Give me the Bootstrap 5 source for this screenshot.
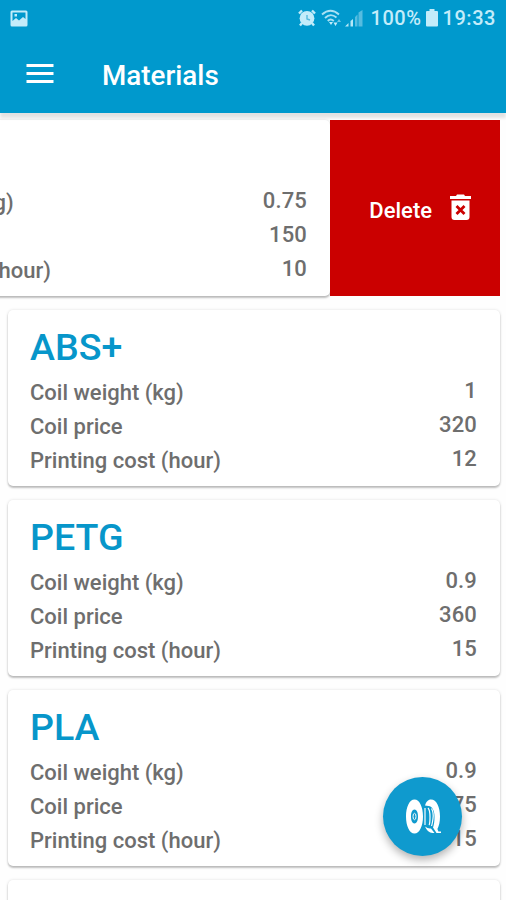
<!DOCTYPE html>
<html lang="en">
<head>
<meta charset="utf-8">
<meta name="viewport" content="width=device-width, initial-scale=1">
<title>Materials</title>
<link href="https://cdn.jsdelivr.net/npm/bootstrap@5.3.0/dist/css/bootstrap.min.css" rel="stylesheet">
<style>
  body { font-family: Roboto, "Liberation Sans", sans-serif; background: #fefefe; height: 900px; font-weight: 500; }
  .app-top { background: #0099cd; height: 113px; color: #fff; box-shadow: 0 5px 3px rgba(0,0,0,.11); z-index: 2; }
  .status-bar { height: 36px; padding: 0 10px 0 10px; color: #c3ecfa; font-size: 20px; line-height: 36px; letter-spacing: .55px; }
  .status-icons { gap: 5px; }
  .batt-text { margin-left: 2px; margin-right: -1px; }
  .wifi-icon { margin-right: -3px; }
  .title-bar { height: 77px; padding: 2px 26px 0; }
  .title-bar h1 { font-size: 27.8px; font-weight: 500; line-height: 36px; padding-left: 48px; }
  .material-list { padding: 7px 6px 0 8px; gap: 14.5px; min-height: 0; }
  .material { height: 175.5px; border: 0; border-radius: 5px; background: #fff; flex: none; padding: 17px 23px 0 22px; box-shadow: 0 2px 2px rgba(0,0,0,.23), 0 0 3px rgba(0,0,0,.13); }
  .material h2 { color: #0796ca; font-size: 37.6px; font-weight: 500; line-height: 40px; margin: 0 0 9px; }
  .spec { height: 34px; line-height: 34px; font-size: 22px; color: #6e6e6e; }
  .spec dt { font-weight: 500; }
  .spec dd { margin: -2px 0 0; letter-spacing: .15px; }
  .swipe-row { height: 175.5px; flex: none; }
  .swiped { transform: translateX(-170px); }
  .delete-action { background: #cb0000; color: #fff; width: 170.5px; height: 175.5px; font-size: 22px; border: 0; padding: 5px 29px 0 0; gap: 18px; z-index: 1; }
  .delete-action svg { margin-top: -5px; }
  .fab { width: 79px; height: 79px; background: #0f9ace; right: 44px; bottom: 44px; border: 0; box-shadow: 0 4px 8px rgba(0,0,0,.3); z-index: 3; }
</style>
</head>
<body class="overflow-hidden position-relative d-flex flex-column">
<header class="app-top position-relative flex-shrink-0">
  <div class="status-bar d-flex justify-content-between align-items-center">
    <svg width="18" height="17" viewBox="0 0 18 17"><path fill="#c3ecfa" fill-rule="evenodd" d="M2 .5h14a1.500 1.500 0 0 1 1.500 1.500v13a1.500 1.500 0 0 1-1.500 1.500H2A1.500 1.500 0 0 1 .5 15V2A1.500 1.500 0 0 1 2 .5zM2.500 2.500v8.500l3.500-3 3 2.500L13 7l2.500 2V2.500zM4.500 4h2.500v2.500H4.500z"/></svg>
    <div class="status-icons d-flex align-items-center">
      <svg width="18" height="18" viewBox="0 0 18 18"><g fill="none" stroke="#c3ecfa" stroke-width="2.400"><path d="M1 4.500 4 1.500M17 4.500l-3-3M4 14l-2 2.500M14 14l2 2.500"/></g><circle cx="9" cy="9.300" r="7.400" fill="#c3ecfa"/><path d="M9 6v4l3 1" stroke="#55bade" stroke-width="1.400" fill="none"/></svg>
      <svg class="wifi-icon" width="22" height="18" viewBox="0 0 22 18"><g fill="none" stroke="#a8e1f4" stroke-width="1.900"><path d="M1 5.500Q9.500-2 18 5.500M4 9Q9.500 3.500 15.500 8.500M6.800 12q2.700-3 6 0"/></g><path fill="#c3ecfa" d="m10 16-2-3h4zM12.500 13.500h4L14.500 17z"/><path fill="#6fc6e5" d="M16 13l2-3 2 3z"/></svg>
      <svg width="18" height="18" viewBox="0 0 18 18"><path fill="#b5e7f7" d="M0 17.500 3.500 14v3.500zM5.500 12 8 10v7.500H5.500z"/><path fill="#56bce0" d="M10 8l2.500-2.500v12H10zM13.500 3.500 17.500 1v16.500h-4z"/></svg>
      <span class="batt-text">100%</span>
      <svg width="12" height="18" viewBox="0 0 12 18"><path fill="#c3ecfa" d="M3.500 0h5v2H11q1 0 1 1v13.500q0 1-1 1H1q-1 0-1-1V3q0-1 1-1h2.500z"/></svg>
      <span class="clock-text">19:33</span>
    </div>
  </div>
  <div class="title-bar d-flex align-items-center">
    <svg class="mb-1" width="28" height="20" viewBox="0 0 28 20"><path fill="#fff" d="M.5 0h27v3H.5zM.5 8h27v3H.5zM.5 16h27v3H.5z"/></svg>
    <h1 class="m-0">Materials</h1>
  </div>
</header>

<main class="material-list d-flex flex-column flex-grow-1 overflow-hidden">
  <div class="swipe-row position-relative d-flex justify-content-end">
    <article class="material swiped card position-absolute top-0 start-0 w-100">
      <h2>ABS</h2>
      <dl class="m-0">
        <div class="spec d-flex justify-content-between"><dt>Coil weight (kg)</dt><dd>0.75</dd></div>
        <div class="spec d-flex justify-content-between"><dt>Coil price</dt><dd>150</dd></div>
        <div class="spec d-flex justify-content-between"><dt>Printing cost (hour)</dt><dd>10</dd></div>
      </dl>
    </article>
    <button type="button" class="delete-action d-flex align-items-center justify-content-end fw-medium">
      <span>Delete</span>
      <svg width="21" height="27" viewBox="0 0 21 27"><path fill="#fff" d="M0 2h6l1-1.500h7L15 2h6v3H0zM1.500 6.500h18V23q0 3-3 3h-12q-3 0-3-3z"/><path d="m6.500 12 8 8m0-8-8 8" stroke="#cb0000" stroke-width="2.800"/></svg>
    </button>
  </div>
  <article class="material card">
    <h2>ABS+</h2>
    <dl class="m-0">
      <div class="spec d-flex justify-content-between"><dt>Coil weight (kg)</dt><dd>1</dd></div>
      <div class="spec d-flex justify-content-between"><dt>Coil price</dt><dd>320</dd></div>
      <div class="spec d-flex justify-content-between"><dt>Printing cost (hour)</dt><dd>12</dd></div>
    </dl>
  </article>
  <article class="material card">
    <h2>PETG</h2>
    <dl class="m-0">
      <div class="spec d-flex justify-content-between"><dt>Coil weight (kg)</dt><dd>0.9</dd></div>
      <div class="spec d-flex justify-content-between"><dt>Coil price</dt><dd>360</dd></div>
      <div class="spec d-flex justify-content-between"><dt>Printing cost (hour)</dt><dd>15</dd></div>
    </dl>
  </article>
  <article class="material card">
    <h2>PLA</h2>
    <dl class="m-0">
      <div class="spec d-flex justify-content-between"><dt>Coil weight (kg)</dt><dd>0.9</dd></div>
      <div class="spec d-flex justify-content-between"><dt>Coil price</dt><dd>375</dd></div>
      <div class="spec d-flex justify-content-between"><dt>Printing cost (hour)</dt><dd>15</dd></div>
    </dl>
  </article>
  <article class="material card"></article>
</main>

<button type="button" class="fab btn rounded-circle position-absolute p-0 d-flex align-items-center justify-content-center" aria-label="Add material">
  <svg width="36" height="36" viewBox="0 0 36 36">
    <path fill="#fff" fill-rule="evenodd" d="M9.500 .5c5 0 8.500 7.500 8.500 17s-3.500 17-8.500 17S1 27 1 17.500 4.500 .5 9.500 .5zM9.500 10.500c-2.200 0-3.500 3-3.500 7s1.300 7 3.500 7 3.500-3 3.500-7-1.300-7-3.500-7z"/>
    <ellipse cx="9.500" cy="17.500" rx="1.500" ry="3.200" fill="none" stroke="#fff" stroke-width="1"/>
    <path fill="#fff" d="M20 6.500C21 3 23 .5 26 .5c5.500 0 9 7.500 9 17 0 5.500-1 9.500-2.600 12.500l1 2.500H36V34h-4.500L28 28.500c1-3 1.500-6.500 1.500-10.500 0-6-2-10.500-6-11z"/>
    <path d="M20 9v17M23 9q2 2 2 9t-1 8M26.500 9.500q2.300 4 1.500 10T26.500 27" fill="none" stroke="#fff" stroke-width="1.200"/>
    <path fill="#fff" d="M20 27.500q3 2.500 6 2l3.500 4.500H28q-5 .5-8-6.500z"/>
  </svg>
</button>
<script src="https://cdn.jsdelivr.net/npm/bootstrap@5.3.0/dist/js/bootstrap.bundle.min.js"></script>
</body>
</html>
